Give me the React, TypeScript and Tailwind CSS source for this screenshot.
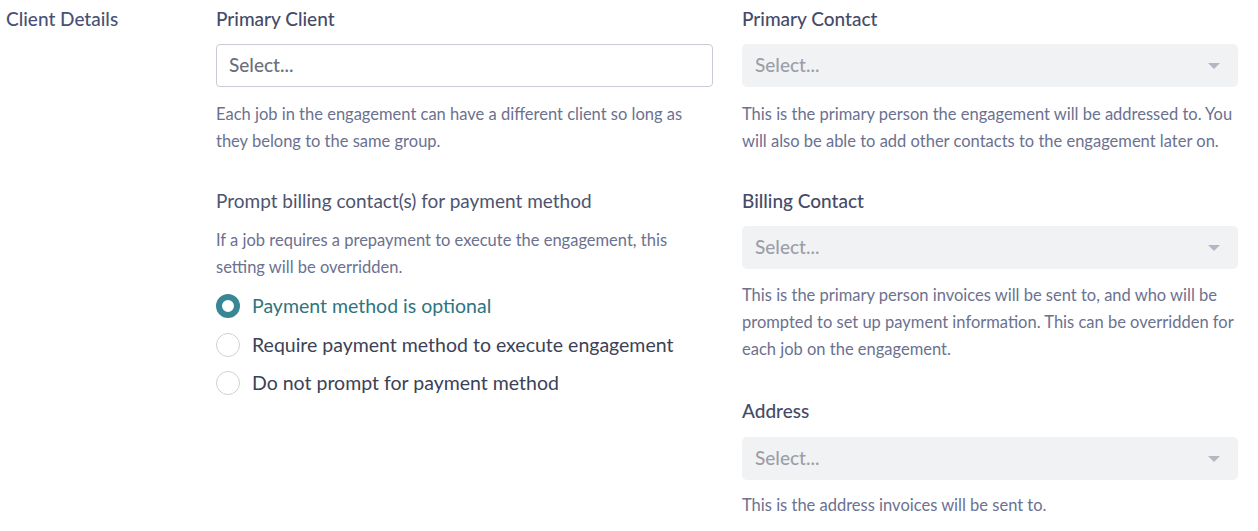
import React from "react";

function SelectBox({ disabled, className = "" }: { disabled?: boolean; className?: string }) {
  if (!disabled) {
    return (
      <div className={"flex h-[43px] items-center rounded-[4px] border border-[#c9cbd5] bg-white px-[12px] text-[19px] font-medium text-[#6b6f7c] " + className}>
        Select...
      </div>
    );
  }
  return (
    <div className={"flex h-[43px] items-center justify-between rounded-[5px] bg-[#f1f2f4] pl-[13px] pr-[18px] text-[19px] font-medium text-[#9c9ea9] " + className}>
      <span>Select...</span>
      <svg width="12" height="6" viewBox="0 0 12 6">
        <path d="M0 0 L12 0 L6 6 Z" fill="#b4b6c1" />
      </svg>
    </div>
  );
}

function Help({ children, className = "" }: { children: React.ReactNode; className?: string }) {
  return <p className={"text-[16.5px] leading-[27px] text-[#6b7190] " + className}>{children}</p>;
}

function Label({ children, className = "" }: { children: React.ReactNode; className?: string }) {
  return <div className={"text-[19px] font-medium leading-[24px] text-[#454b68] " + className}>{children}</div>;
}

const options = [
  "Payment method is optional",
  "Require payment method to execute engagement",
  "Do not prompt for payment method",
];

export default function App() {
  return (
    <div className="flex min-h-[531px] bg-white pt-[7px] font-['Lato',sans-serif]">
      <div className="w-[216px] shrink-0 pl-[6px] text-[19px] font-medium leading-[24px] text-[#4a5175]">
        Client Details
      </div>

      <div className="grid w-[1022px] grid-cols-[497px_496px] gap-x-[29px]">
        <div>
          <Label>Primary Client</Label>
          <SelectBox className="mt-[13px]" />
          <Help className="mt-[14px]">
            Each job in the engagement can have a different client so long as they belong to the same group.
          </Help>

          <div className="mt-[34px] text-[19px] leading-[24px] text-[#4d5470]">
            Prompt billing contact(s) for payment method
          </div>
          <Help className="mt-[14px]">
            If a job requires a prepayment to execute the engagement, this setting will be overridden.
          </Help>
          <div className="mt-[13px] flex flex-col gap-[14.5px]">
            {options.map((o, i) => (
              <label key={o} className="flex h-[24px] items-center gap-[12px]">
                {i === 0 ? (
                  <span className="h-[24px] w-[24px] rounded-full border-[6px] border-[#378894] bg-white" />
                ) : (
                  <span className="h-[24px] w-[24px] rounded-full border border-[#cfd1da] bg-white" />
                )}
                <span className={"text-[19.5px] " + (i === 0 ? "text-[#2f7480]" : "text-[#3b4256]")}>
                  {o}
                </span>
              </label>
            ))}
          </div>
        </div>

        <div>
          <Label>Primary Contact</Label>
          <SelectBox disabled className="mt-[13px]" />
          <Help className="mt-[14px]">
            This is the primary person the engagement will be addressed to. You will also be able to add other contacts to the engagement later on.
          </Help>

          <Label className="mt-[34px]">Billing Contact</Label>
          <SelectBox disabled className="mt-[13px]" />
          <Help className="mt-[13px]">
            This is the primary person invoices will be sent to, and who will be prompted to set up payment information. This can be overridden for each job on the engagement.
          </Help>

          <Label className="mt-[36px]">Address</Label>
          <SelectBox disabled className="mt-[14px]" />
          <Help className="mt-[12px]">This is the address invoices will be sent to.</Help>
        </div>
      </div>
    </div>
  );
}
